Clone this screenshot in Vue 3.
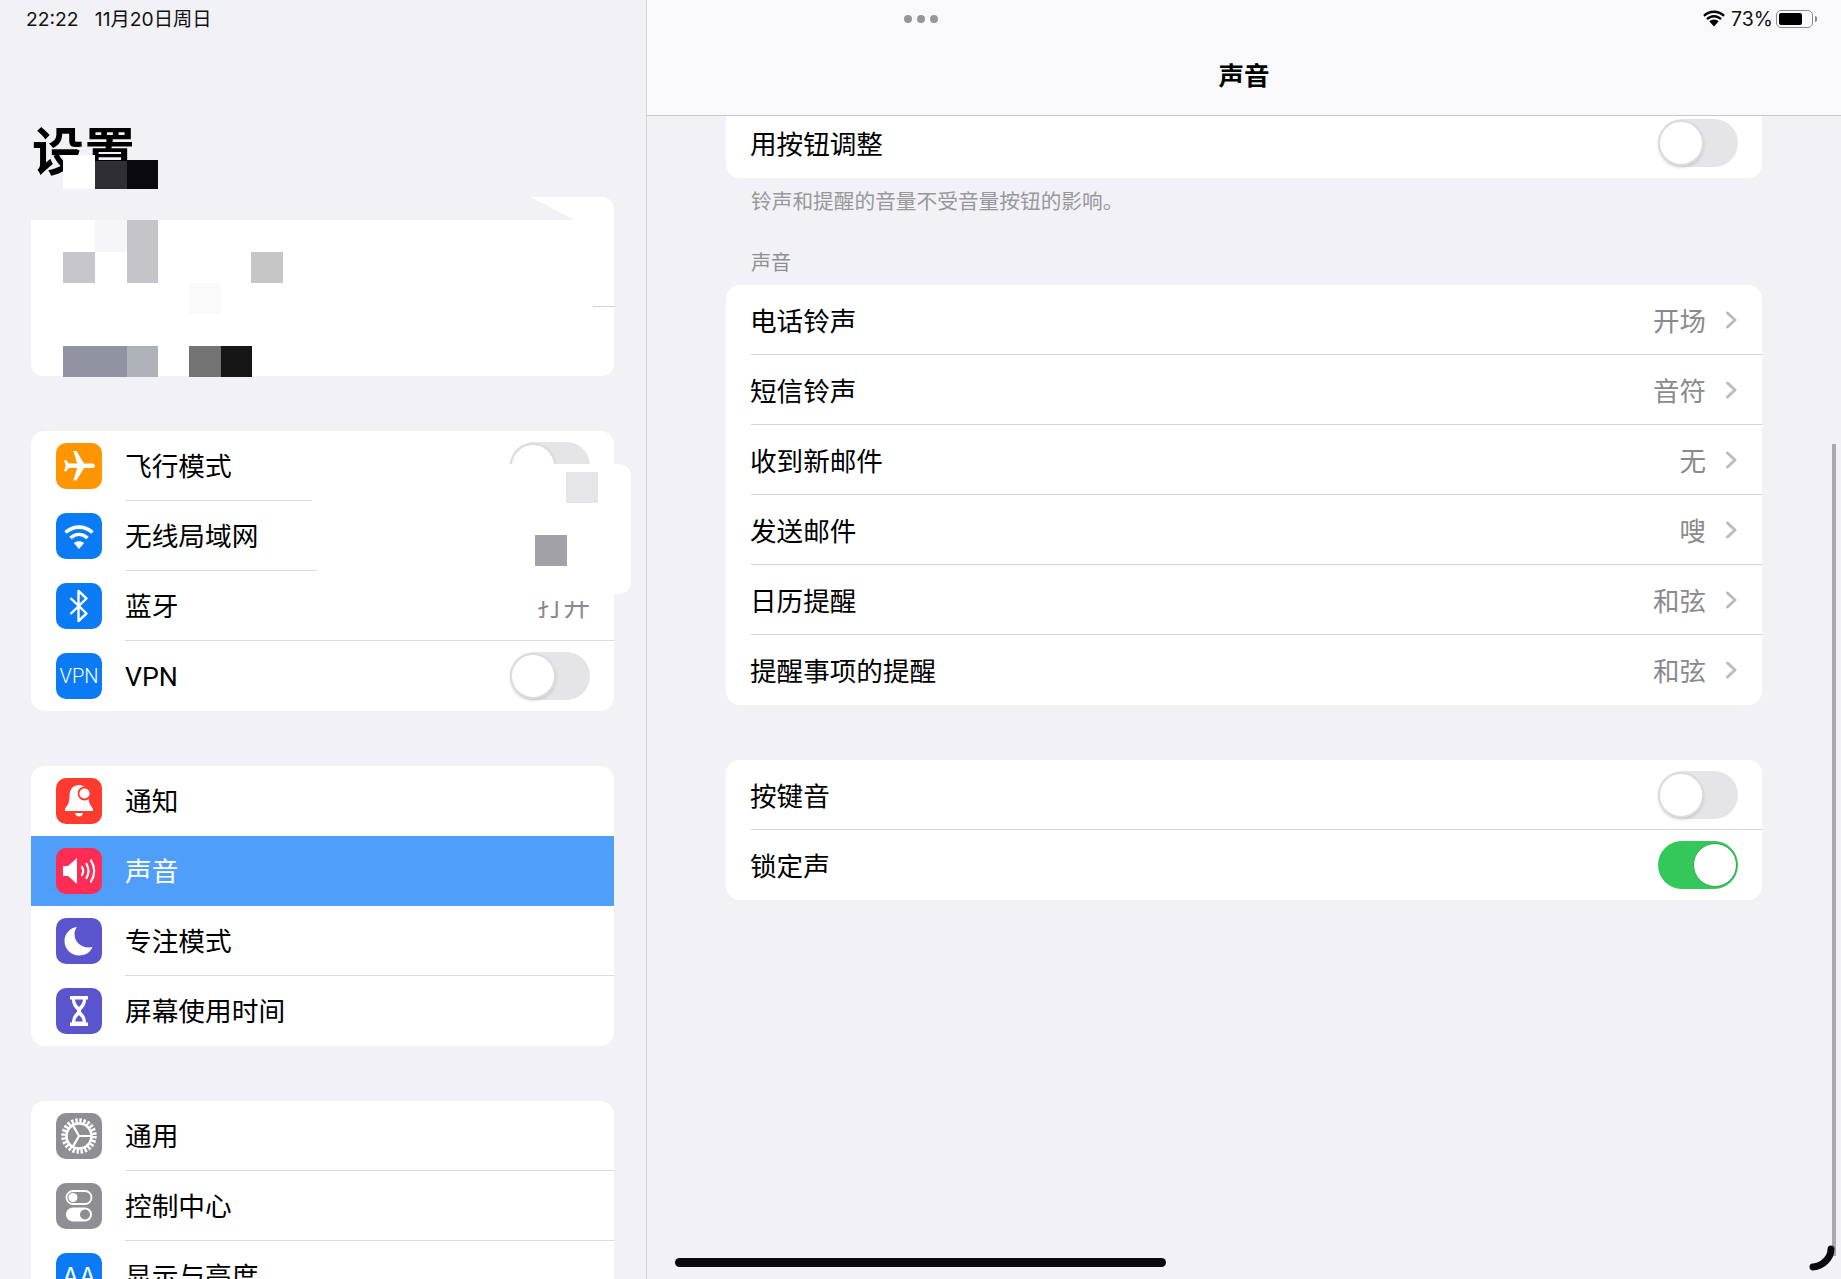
<script setup>
const group2 = [
  { label: '飞行模式', icon: 'plane', bg: '#ff9500', toggle: true },
  { label: '无线局域网', icon: 'wifi', bg: '#0a7bf5' },
  { label: '蓝牙', icon: 'bt', bg: '#0a7bf5', value: '打开' },
  { label: 'VPN', icon: 'vpn', bg: '#0a7bf5', toggle: true }
]
const group3 = [
  { label: '通知', icon: 'bell', bg: '#ff3b30' },
  { label: '声音', icon: 'sound', bg: '#ff2d55', active: true },
  { label: '专注模式', icon: 'moon', bg: '#5a55cc' },
  { label: '屏幕使用时间', icon: 'hourglass', bg: '#5a55cc' }
]
const group4 = [
  { label: '通用', icon: 'gear', bg: '#8e8e93' },
  { label: '控制中心', icon: 'control', bg: '#8e8e93' },
  { label: '显示与亮度', icon: 'aa', bg: '#0a7bf5' }
]
const groups = [group2, group3, group4]
const tones = [
  ['电话铃声', '开场'],
  ['短信铃声', '音符'],
  ['收到新邮件', '无'],
  ['发送邮件', '嗖'],
  ['日历提醒', '和弦'],
  ['提醒事项的提醒', '和弦']
]
const mosaic = [
  { l: 63, t: 155, w: 32, h: 34, c: '#ffffff' },
  { l: 95, t: 161, w: 32, h: 28, c: '#2e2e34' },
  { l: 127, t: 160, w: 31, h: 29, c: '#0a0a0e' },
  { l: 95, t: 220, w: 32, h: 32, c: '#f6f6f8' },
  { l: 127, t: 220, w: 31, h: 63, c: '#c5c5c9' },
  { l: 63, t: 252, w: 32, h: 31, c: '#c7c7cb' },
  { l: 251, t: 252, w: 32, h: 31, c: '#c6c6c6' },
  { l: 189, t: 283, w: 32, h: 31, c: '#fafafa' },
  { l: 63, t: 346, w: 64, h: 31, c: '#9094a0' },
  { l: 127, t: 346, w: 31, h: 31, c: '#aeb2b9' },
  { l: 189, t: 346, w: 32, h: 31, c: '#737373' },
  { l: 221, t: 346, w: 31, h: 31, c: '#161616' },
  { l: 566, t: 472, w: 32, h: 31, c: '#e6e6e8' },
  { l: 535, t: 535, w: 32, h: 31, c: '#a2a2a6' }
]
</script>

<template>
  <div class="page">
    <aside class="sidebar">
      <div class="status-left">22:22&nbsp;&nbsp; 11月20日周日</div>
      <h1 class="big-title">设置</h1>
      <div class="profile"></div>
      <section v-for="(group, gi) in groups" :key="gi" class="side-card">
        <div v-for="row in group" :key="row.label" class="side-row" :class="{ active: row.active }">
          <span class="icon" :style="{ background: row.bg }">
            <svg v-if="row.icon === 'plane'" viewBox="0 0 24 24" width="37" height="37"><path transform="rotate(90 12 12)" fill="#fff" d="M21 16v-2l-8-5V3.5c0-.83-.67-1.5-1.5-1.5S10 2.67 10 3.5V9l-8 5v2l8-2.5V19l-2 1.5V22l3.5-1 3.5 1v-1.5L13 19v-5.5l8 2.5z"/></svg>
            <svg v-else-if="row.icon === 'wifi'" viewBox="0 0 46 46" width="46" height="46" fill="none" stroke="#fff" stroke-width="3.6"><path d="M9.5 19.5c8-7.2 19-7.2 27 0"/><path d="M14.5 25c5.2-4.6 11.800-4.600 17 0"/><path fill="#fff" stroke="none" d="M23 36l-5.200-6c3-2.400 7.400-2.400 10.400 0z"/></svg>
            <svg v-else-if="row.icon === 'bt'" viewBox="0 0 46 46" width="46" height="46" fill="none" stroke="#fff" stroke-width="2.4" stroke-linejoin="round"><path d="M14.500 15l16 15.500-8 7.500V8l8 7.500L14.500 31"/></svg>
            <span v-else-if="row.icon === 'vpn'" class="vpn-text">VPN</span>
            <svg v-else-if="row.icon === 'bell'" viewBox="0 0 46 46" width="46" height="46"><path fill="#fff" d="M23 7c-6.500 0-9.500 5-9.500 11 0 5.500-1 8.500-4.500 12.500v2.500h28v-2.500c-3.500-4-4.500-7-4.500-12.500 0-6-3-11-9.500-11z"/><path fill="#fff" d="M19 35h8c-.5 2.500-2 3.500-4 3.500s-3.500-1-4-3.500z"/><circle cx="28.500" cy="15.500" r="6" fill="#fff" stroke="#ff3b30" stroke-width="1.800"/></svg>
            <svg v-else-if="row.icon === 'sound'" viewBox="0 0 46 46" width="46" height="46"><path fill="#fff" d="M7 18h5l9-8v26l-9-8H7z"/><path fill="none" stroke="#fff" stroke-width="2.200" stroke-linecap="round" d="M26 19c1.600 2.800 1.600 5.200 0 8M30.500 16c2.600 4.600 2.600 9.400 0 14M35 12.500c4 6.600 4 14.400 0 21"/></svg>
            <svg v-else-if="row.icon === 'moon'" viewBox="0 0 46 46" width="46" height="46"><path fill="#fff" d="M21 9c-7.500 1-12.500 6.800-12.500 14 0 8 6.500 14.500 14.500 14.500 6.500 0 11.500-3.500 13.500-8.500-9.500 2-18-4-18-13 0-2.700 1-5.200 2.500-7z"/></svg>
            <svg v-else-if="row.icon === 'hourglass'" viewBox="0 0 46 46" width="46" height="46"><path fill="#fff" d="M14 8h18v3.500h-2c0 5-2.500 8.500-5 10.500v2c2.500 2 5 5.500 5 10.500h2V38H14v-3.500h2c0-5 2.500-8.500 5-10.500v-2c-2.500-2-5-5.500-5-10.500h-2z"/><path fill="#5a55cc" d="M19 11.500h8c-.3 2.500-1.300 5-4 7.500-2.700-2.500-3.700-5-4-7.500zM23 27c-2.200 1.800-3.400 4-3.800 6.500h7.600c-.4-2.500-1.600-4.700-3.800-6.500z"/></svg>
            <svg v-else-if="row.icon === 'gear'" viewBox="0 0 46 46" width="46" height="46" fill="none" stroke="#fff"><circle cx="23" cy="23" r="15.500" stroke-width="4.500" stroke-dasharray="2.400 1.652"/><circle cx="23" cy="23" r="12.500" stroke-width="2.600"/><path stroke-width="2.200" d="M23 23H35M23 23l-6-10.400M23 23l-6 10.400"/></svg>
            <svg v-else-if="row.icon === 'control'" viewBox="0 0 46 46" width="46" height="46"><rect x="10.500" y="8" width="25" height="13" rx="6.500" fill="none" stroke="#fff" stroke-width="1.800"/><circle cx="17" cy="14.500" r="4.500" fill="#fff"/><rect x="10" y="24.500" width="26" height="14" rx="7" fill="#fff"/><circle cx="29" cy="31.500" r="5" fill="#8e8e93"/></svg>
            <span v-else class="aa-text">AA</span>
          </span>
          <span class="side-label">{{ row.label }}</span>
          <span v-if="row.value" class="side-value">{{ row.value }}</span>
          <span v-if="row.toggle" class="switch side-switch"><i></i></span>
        </div>
      </section>
    </aside>

    <main class="detail">
      <header class="nav">
        <div class="dots"><i></i><i></i><i></i></div>
        <div class="status-right">
          <svg viewBox="0 0 22 17" width="22" height="17"><path fill="#000" d="M11 3c3.600 0 6.900 1.400 9.300 3.700l1.500-1.700C19 2.200 15.200.5 11 .5S3 2.200.2 5l1.500 1.700C4.100 4.400 7.400 3 11 3z"/><path fill="#000" d="M11 7.500c2.400 0 4.600.9 6.200 2.500l1.600-1.700C16.700 6.300 14 5 11 5S5.300 6.300 3.200 8.300L4.800 10c1.600-1.600 3.800-2.500 6.200-2.500z"/><path fill="#000" d="M11 9.500c-1.800 0-3.400.7-4.600 1.900L11 16.500l4.600-5.100C14.400 10.200 12.800 9.500 11 9.500z"/></svg>
          <span class="pct">73%</span>
          <span class="battery"><i></i></span>
          <span class="nub"></span>
        </div>
        <div class="nav-title">声音</div>
      </header>

      <div class="content">
        <section class="card clipped">
          <div class="row"><span class="lbl">用按钮调整</span><span class="switch"><i></i></span></div>
        </section>
        <p class="note">铃声和提醒的音量不受音量按钮的影响。</p>
        <p class="section-head">声音</p>
        <section class="card">
          <div v-for="t in tones" :key="t[0]" class="row sep">
            <span class="lbl">{{ t[0] }}</span>
            <span class="lbl value">{{ t[1] }}</span>
            <svg class="chev" viewBox="0 0 13 18" width="13" height="18"><path d="M2.500 2l7.500 7-7.500 7" fill="none" stroke="#bcbcc0" stroke-width="3" stroke-linecap="round" stroke-linejoin="round"/></svg>
          </div>
        </section>
        <section class="card third">
          <div class="row sep"><span class="lbl">按键音</span><span class="switch"><i></i></span></div>
          <div class="row sep"><span class="lbl">锁定声</span><span class="switch on"><i></i></span></div>
        </section>
      </div>
    </main>

    <!-- overlays: redaction mosaic, scrollbar and gesture markers lying over the content -->
    <div class="notch-cover"></div>
    <div class="patch"></div>
    <div class="patch-strip"></div>
    <div class="tick"></div>
    <div v-for="(m, i) in mosaic" :key="i" class="tile"
      :style="{ left: m.l + 'px', top: m.t + 'px', width: m.w + 'px', height: m.h + 'px', background: m.c }"></div>
    <div class="scrollbar"></div>
    <div class="home"></div>
    <svg class="corner" viewBox="0 0 28 28" width="28" height="28"><path d="M24 4c0 9-8 17-18 18" fill="none" stroke="#0a0a0e" stroke-width="7" stroke-linecap="round"/></svg>
  </div>
</template>

<style scoped>
.page {
  position: relative;
  display: flex;
  width: 1841px;
  height: 1279px;
  overflow: hidden;
  background: #f1f1f6;
  color: #000;
  font-family: "Inter", "Noto Sans CJK SC", sans-serif;
}
.sidebar {
  width: 647px;
  flex: none;
  box-sizing: border-box;
  padding: 7px 32px 0 31px;
  border-right: 1px solid #d6d6da;
  background: #f1f1f6;
}
.status-left {
  font-size: 19.300px;
  line-height: 24px;
  margin-left: -5px;
  color: #111;
}
.big-title {
  margin: 91px 0 0 1px;
  font-size: 52px;
  line-height: 62px;
  font-weight: 700;
  height: 75px;
}
.profile {
  height: 179px;
  background: #fff;
  border-radius: 12px;
}
.side-card {
  margin-top: 55px;
  background: #fff;
  border-radius: 14px;
  overflow: hidden;
}
.side-row {
  position: relative;
  display: flex;
  align-items: center;
  height: 70px;
  padding-left: 25px;
  padding-right: 24px;
}
.side-row:not(:last-child)::after {
  content: "";
  position: absolute;
  left: 94px;
  right: 0;
  bottom: 0;
  height: 1px;
  background: #dcdce0;
}
.side-row.active::after,
.side-row:has(+ .active)::after {
  display: none;
}
.side-row.active {
  background: #4e9efa;
  color: #fff;
}
.icon {
  flex: none;
  display: flex;
  align-items: center;
  justify-content: center;
  width: 46px;
  height: 46px;
  border-radius: 10px;
  overflow: hidden;
}
.vpn-text {
  color: #fff;
  font-family: "Roboto", sans-serif;
  font-size: 20px;
  font-weight: 300;
}
.aa-text {
  color: #fff;
  font-size: 24px;
  font-weight: 400;
}
.side-label {
  margin-left: 23px;
  margin-top: 2px;
  font-family: "Roboto", "Noto Sans CJK SC", sans-serif;
  font-size: 26.700px;
  line-height: 36px;
}
.side-value {
  margin-left: auto;
  margin-bottom: 3px;
  font-size: 26.500px;
  color: #8a8a8e;
}
.switch {
  position: relative;
  flex: none;
  display: block;
  width: 80px;
  height: 48px;
  margin-left: auto;
  border-radius: 24px;
  background: #e5e5e8;
}
.switch i {
  position: absolute;
  left: 0;
  top: 1px;
  box-sizing: border-box;
  width: 46px;
  height: 46px;
  border-radius: 50%;
  background: #fff;
  border: 2px solid #dcdcdc;
  box-shadow: 0 2px 3px rgba(0, 0, 0, 0.12);
}
.switch.on {
  background: #34c759;
}
.switch.on i {
  left: 35px;
  top: 2px;
  width: 44px;
  height: 44px;
  border: 1px solid #2fa84e;
  box-shadow: none;
}
.detail {
  position: relative;
  flex: 1;
  min-width: 0;
  display: flex;
  flex-direction: column;
}
.nav {
  position: relative;
  height: 116px;
  flex: none;
  box-sizing: border-box;
  border-bottom: 1px solid #c8c8cc;
  background: #f9f9fb;
}
.dots {
  position: absolute;
  left: 257px;
  top: 15px;
  display: flex;
  gap: 5px;
}
.dots i {
  width: 8px;
  height: 8px;
  border-radius: 50%;
  background: #96969a;
}
.status-right {
  position: absolute;
  right: 24px;
  top: 8px;
  display: flex;
  align-items: center;
  height: 21px;
  color: #111;
}
.pct {
  margin: 0 3px 0 6px;
  font-size: 19.500px;
}
.battery {
  display: block;
  box-sizing: border-box;
  width: 37px;
  height: 18px;
  padding: 2px;
  border: 1px solid #8a8a8e;
  border-radius: 5px;
}
.battery i {
  display: block;
  width: 23px;
  height: 12px;
  background: #000;
  border-radius: 2px;
}
.nub {
  width: 2px;
  height: 6px;
  margin-left: 2px;
  background: #8a8a8e;
  border-radius: 0 2px 2px 0;
}
.nav-title {
  padding-top: 58px;
  text-align: center;
  font-size: 25.500px;
  line-height: 36px;
  font-weight: 600;
}
.content {
  padding: 0 79px;
}
.card {
  background: #fff;
  border-radius: 14px;
  overflow: hidden;
}
.clipped {
  border-radius: 0 0 14px 14px;
}
.clipped .row {
  height: 62px;
  padding-bottom: 8px;
  box-sizing: border-box;
}
.row {
  position: relative;
  display: flex;
  align-items: center;
  height: 70px;
  padding: 0 24px;
  font-size: 26.600px;
}
.lbl {
  margin-bottom: 2px;
}
.row.sep:not(:last-child)::after {
  content: "";
  position: absolute;
  left: 25px;
  right: 0;
  bottom: 0;
  height: 1px;
  background: #d5d5d9;
}
.value {
  margin-left: auto;
  margin-right: 19px;
  font-size: 26.500px;
  color: #8a8a8e;
}
.chev {
  flex: none;
}
.note {
  margin: 10px 0 0 25px;
  font-size: 20.700px;
  line-height: 28px;
  color: #98989c;
}
.section-head {
  margin: 33px 0 0 25px;
  font-size: 20px;
  line-height: 28px;
  height: 36px;
  color: #8e8e93;
}
.third {
  margin-top: 55px;
}
.notch-cover {
  position: absolute;
  left: 31px;
  top: 196px;
  width: 547px;
  height: 24px;
  background: #f1f1f6;
  clip-path: polygon(0 0, 497px 0, 544px 24px, 0 24px);
}
.patch {
  position: absolute;
  left: 312px;
  top: 464px;
  width: 319px;
  height: 130px;
  background: #fff;
  border-radius: 0 12px 12px 0;
  clip-path: polygon(0 0, 100% 0, 100% 100%, 5px 100%, 5px 80px, 0 80px);
}
.patch-strip {
  position: absolute;
  left: 530px;
  top: 594px;
  width: 70px;
  height: 7px;
  background: #fff;
}
.tick {
  position: absolute;
  left: 593px;
  top: 306px;
  width: 22px;
  height: 1px;
  background: #cfcfd2;
}
.tile {
  position: absolute;
}
.scrollbar {
  position: absolute;
  left: 1832px;
  top: 444px;
  width: 4px;
  height: 812px;
  background: #a8a8ad;
}
.home {
  position: absolute;
  left: 675px;
  top: 1258px;
  width: 491px;
  height: 9px;
  border-radius: 5px;
  background: #0a0a0e;
}
.corner {
  position: absolute;
  left: 1807px;
  top: 1245px;
}
</style>

<style>
html, body { margin: 0; background: #f1f1f6; }
</style>
